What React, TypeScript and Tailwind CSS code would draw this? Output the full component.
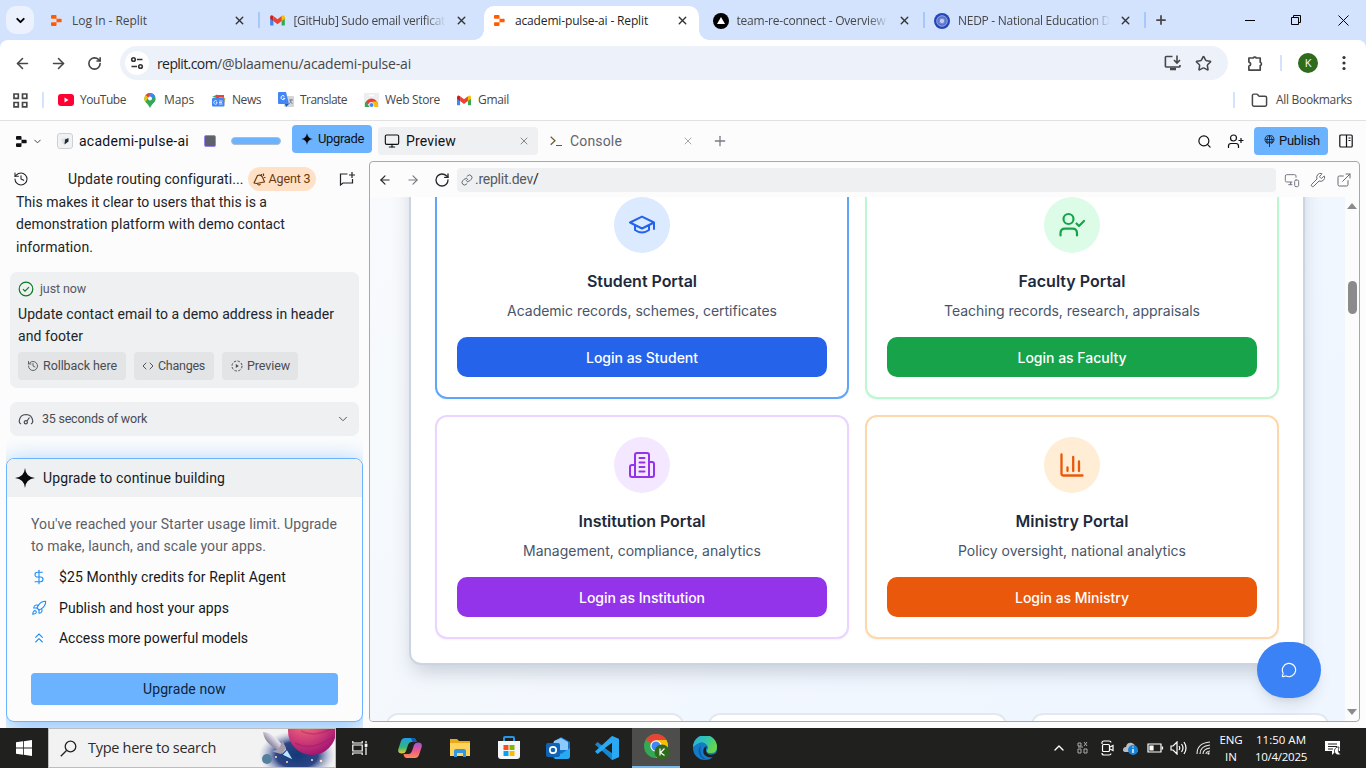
import React, { useLayoutEffect, useRef, useState } from 'react';
import {
  ArrowLeft, ArrowRight, RotateCw, Star, ChevronDown, ChevronUp, X, Plus, Search, Monitor,
  MessageCircle, History, Code, Rocket, ChevronsUp, DollarSign, Wrench, ExternalLink,
  Link, Folder, MonitorSmartphone,
} from 'lucide-react';

/** Single-line text whose tracking is adjusted so it fills the given width. */
function Fit({ w, children, className = '' }: { w: number; children: string; className?: string }) {
  const ref = useRef<HTMLSpanElement>(null);
  const [ls, setLs] = useState(0);
  useLayoutEffect(() => {
    if (!ref.current) return;
    const natural = ref.current.getBoundingClientRect().width - ls * children.length;
    setLs((w - natural) / children.length);
  }, [w, children]);
  return (
    <span ref={ref} className={'inline-block shrink-0 whitespace-pre ' + className} style={{ letterSpacing: ls }}>
      {children}
    </span>
  );
}

const ui = "font-['Open_Sans',sans-serif]";
const plex = "font-['Roboto',sans-serif]";

function ReplitLogo({ className }: { className: string }) {
  return (
    <svg viewBox="0 0 12 14" className={className} fill="currentColor">
      <path d="M1 1h4a1 1 0 0 1 1 1v3H1a1 1 0 0 1-1-1V2a1 1 0 0 1 1-1zM6 5h4.600a1 1 0 0 1 1 1v2a1 1 0 0 1-1 1H6zM1 9h5v3a1 1 0 0 1-1 1H1a1 1 0 0 1-1-1v-2a1 1 0 0 1 1-1z" />
    </svg>
  );
}

function Gmail({ className }: { className: string }) {
  return (
    <svg viewBox="0 0 16 12" className={className}>
      <path d="M0 2.500V10.500Q0 11.500 1 11.500H3.500V4.500z" fill="#4285f4" />
      <path d="M16 2.500V10.500Q16 11.500 15 11.500H12.500V4.500z" fill="#34a853" />
      <path d="M12.500 1.200 14.200.3Q16 .2 16 2.200V4L12.500 6.500z" fill="#fbbc04" />
      <path d="M3.500 1.200 1.800.3Q0 .2 0 2.200V4L3.500 6.500z" fill="#c5221f" />
      <path d="M3.500 1.200 8 4.700l4.500-3.500V6.500L8 10 3.500 6.500z" fill="#ea4335" />
    </svg>
  );
}

function Tab({ icon, title, w, active, sep }: { icon: React.ReactNode; title: string; w: number; active?: boolean; sep?: boolean }) {
  return (
    <div className="flex h-[34px] w-[221.500px] shrink-0 items-start">
      <div className={'relative ml-px flex h-[34px] w-[215px] items-center rounded-t-[10px] pl-[7px] pb-[5px] ' + (active ? 'bg-white' : '')}>
        {active && (
          <>
            <span className="absolute -left-[10px] bottom-0 size-[10px] bg-[radial-gradient(circle_at_0_0,transparent_9.500px,white_10px)]" />
            <span className="absolute -right-[10px] bottom-0 size-[10px] bg-[radial-gradient(circle_at_100%_0,transparent_9.500px,white_10px)]" />
          </>
        )}
        <span className="flex size-4 shrink-0 items-center justify-center">{icon}</span>
        <div className={'ml-2 mr-[9px] w-[152px] overflow-hidden text-[12px] leading-[18px] ' + (active ? 'text-[#1f1f1f]' : 'text-[#474747] ') + (w > 148 ? ' [mask-image:linear-gradient(90deg,black_86%,transparent)]' : '')}>
          <Fit w={w}>{title}</Fit>
        </div>
        <X className="size-[13px] shrink-0 text-[#333]" strokeWidth={2.600} />
      </div>
      {sep && <span className="ml-[2px] mt-[6px] h-4 w-[2px] bg-[#a8c7fa]" />}
    </div>
  );
}

function Bookmark({ icon, label, w, className }: { icon: React.ReactNode; label: string; w: number; className: string }) {
  return (
    <div className={'flex shrink-0 items-center gap-[6px] text-[12px] text-[#474747] ' + className}>
      <span className="flex size-4 items-center justify-center">{icon}</span>
      <Fit w={w}>{label}</Fit>
    </div>
  );
}

function BrowserChrome() {
  return (
    <div className={'shrink-0 bg-[#d3e3fd] ' + ui}>
      <div className="flex h-10 items-start pt-[6px]">
        <div className="ml-[6px] mr-[6px] flex size-7 shrink-0 items-center justify-center rounded-[10px] bg-[#ebf2fe]">
          <ChevronDown className="size-[13px]" strokeWidth={3.500} />
        </div>
        <Tab icon={<ReplitLogo className="h-[13px] w-[11px] text-[#ff5c00]" />} title="Log In - Replit" w={75} sep />
        <Tab icon={<Gmail className="h-[11px] w-[15px]" />} title="[GitHub] Sudo email verificat" w={151.500} />
        <Tab icon={<ReplitLogo className="h-[13px] w-[11px] text-[#ff5c00]" />} title="academi-pulse-ai - Replit" w={133} active />
        <Tab
          icon={<svg viewBox="0 0 16 16" className="size-4"><circle cx="8" cy="8" r="8" /><path d="M8 4 12 11H4z" fill="white" /></svg>}
          title="team-re-connect - Overview" w={149} sep
        />
        <Tab
          icon={<svg viewBox="0 0 16 16" className="size-4"><circle cx="8" cy="8" r="8" fill="#2546b8" /><circle cx="8" cy="8" r="5.300" fill="#5b74cb" stroke="#a9b8ea" strokeWidth=".8" /><circle cx="8" cy="8" r="2.700" fill="#c2ccf1" stroke="#7188d4" /></svg>}
          title="NEDP - National Education D" w={152} sep
        />
        <Plus className="ml-[6px] mt-[7px] size-[14px] shrink-0 text-[#474747]" strokeWidth={3} />
        <div className="ml-auto flex h-7 items-center pr-[17px]">
          <svg className="h-px w-[10px]"><rect width="10" height="1" /></svg>
          <svg viewBox="0 0 10 10" className="ml-9 size-[10px]" fill="none" stroke="black"><path d="M.5 2.500h7v7h-7zM2.500 2.500v-2h7v7h-2" /></svg>
          <svg viewBox="0 0 11 11" className="ml-[37px] size-[11px]" fill="none" stroke="black"><path d="m.5.5 10 10m0-10-10 10" /></svg>
        </div>
      </div>

      <div className="rounded-t-[8px] bg-white">
        <div className="flex h-[46px] items-center pl-1 text-[#474747]">
          <span className="flex w-9 shrink-0 justify-center"><ArrowLeft className="size-[17px]" strokeWidth={2.300} /></span>
          <span className="flex w-9 shrink-0 justify-center"><ArrowRight className="size-[17px]" strokeWidth={2.300} /></span>
          <span className="flex w-9 shrink-0 justify-center"><RotateCw className="size-[15px]" strokeWidth={2.600} /></span>
          <div className="ml-2 flex h-[34px] w-[1108px] shrink-0 items-center rounded-full bg-[#edf1fa] pl-[5px]">
            <span className="flex size-6 items-center justify-center rounded-full bg-white">
              <svg viewBox="0 0 14 14" className="size-[14px]" fill="none" stroke="#333" strokeWidth="1.600">
                <circle cx="3.500" cy="3.500" r="1.800" /><path d="M7 3.500h5.500M1.500 10.500H7" /><circle cx="10.500" cy="10.500" r="1.800" />
              </svg>
            </span>
            <span className="ml-2 flex text-[14px]">
              <Fit w={60} className="text-[#1f1f1f]">replit.com</Fit>
              <Fit w={194}>/@blaamenu/academi-pulse-ai</Fit>
            </span>
            <svg viewBox="0 0 18 16" className="ml-auto mr-[13px] h-4 w-[18px]" fill="none" stroke="currentColor" strokeWidth="1.600">
              <path d="M8.500 1.500H2.200a.8.8 0 0 0-.8.8v8.900a.8.8 0 0 0 .8.8h13a.8.800 0 0 0 .8-.8V10" /><path d="M13 .5V8M10 5l3 3 3-3" /><path d="M6 14h6" strokeWidth="2.500" />
            </svg>
            <Star className="mr-[16px] size-[17px]" strokeWidth={2.200} />
          </div>
          <span className="ml-[9px] flex w-9 shrink-0 justify-center">
            <svg viewBox="0 0 18 18" className="size-[17px]" fill="none" stroke="currentColor" strokeWidth="1.800" strokeLinejoin="round">
              <path d="M2 3.200h4.500a1.900 1.900 0 0 1 3.400 0H14v4.500a1.900 1.900 0 0 1 0 3.600V16H2v-4.300c2.500-.3 2.500-3.800 0-4.200z" />
            </svg>
          </span>
          <span className="ml-[7px] h-4 w-[2px] bg-[#d3e3fd]" />
          <span className="ml-4 flex size-5 shrink-0 items-center justify-center rounded-full bg-[#2f6b1c] text-[11px] text-white">K</span>
          <svg viewBox="0 0 4 16" className="ml-6 h-4 w-1" fill="#333"><circle cx="2" cy="2.500" r="1.600" /><circle cx="2" cy="8" r="1.600" /><circle cx="2" cy="13.500" r="1.600" /></svg>
        </div>

        <div className="flex h-[35px] items-center border-b border-[#e1e1e3] pb-[6px]">
          <svg viewBox="0 0 15 15" className="ml-[13px] size-[15px] shrink-0" fill="none" stroke="#474747" strokeWidth="1.700"><path d="M1 1h4.300v4.300H1zM9.500 1h4.300v4.300H9.500zM1 9.500h4.300v4.300H1zM9.500 9.500h4.300v4.300H9.500z" /></svg>
          <span className="ml-[14px] mr-[14px] h-4 w-[2px] shrink-0 bg-[#d3e3fd]" />
          <Bookmark className="w-[84px]" w={46} label="YouTube" icon={<svg viewBox="0 0 16 12" className="h-3 w-4"><rect width="16" height="12" rx="3" fill="#ff0033" /><path d="M6.500 3.500v5l4-2.500z" fill="white" /></svg>} />
          <Bookmark className="w-[68px]" w={30} label="Maps" icon={
            <svg viewBox="0 0 12 16" className="h-[15px] w-3"><path d="M6 0a6 6 0 0 0-6 6c0 4 4 5 6 10 2-5 6-6 6-10a6 6 0 0 0-6-6" fill="#34a853" /><path d="M0 6a6 6 0 0 1 1.500-4L4.500 4.500 1 9.500A6 6 0 0 1 0 6" fill="#fbbc04" /><path d="M1.500 2A6 6 0 0 1 6 0L4.500 5z" fill="#ea4335" /><path d="M5 0q5-.5 6.500 3.500L6 8z" fill="#4285f4" /><circle cx="6" cy="5.800" r="2.100" fill="white" /></svg>} />
          <Bookmark className="w-[68px]" w={29} label="News" icon={
            <svg viewBox="0 0 15 13" className="h-[13px] w-[15px]"><path d="m1 3 5-2.500 2 4z" fill="#34a853" /><path d="m5 1 8 0v4H5z" fill="#ea4335" /><path d="m8 3 6.500 1-1 5z" fill="#fbbc04" /><rect x="1" y="4" width="12.500" height="8.500" rx="1" fill="#4285f4" /><path d="M6 7.300a1.800 1.800 0 1 0 0 2.200V8.400H4.800M8 7h3.500M8 8.500h3M8 10h3.500" stroke="white" fill="none" strokeWidth=".8" /></svg>} />
          <Bookmark className="w-[85px]" w={47} label="Translate" icon={
            <svg viewBox="0 0 16 16" className="size-4"><rect x="6" y="4" width="10" height="11" rx="1" fill="#d2d5da" /><path d="M1 0h7l3 12H1a1 1 0 0 1-1-1V1a1 1 0 0 1 1-1" fill="#4285f4" /><path d="m7 12 4 0-3 3z" fill="#1a56c4" /><path d="M6.500 4.300a2 2 0 1 0 .4 2H5" stroke="white" fill="none" /><path d="M11 8h4M13 7v1c0 2-1 3-2 4m1-3 2.500 3" stroke="#6b7785" strokeWidth=".8" fill="none" /></svg>} />
          <Bookmark className="w-[93px]" w={55} label="Web Store" icon={
            <svg viewBox="0 0 15 14" className="h-[14px] w-[15px]"><path d="M0 0h15v14H0z" fill="#eceef0" /><path d="M5 2.500h5" stroke="white" strokeWidth="1.500" /><path d="M1 12a6.500 6.500 0 0 1 13 0l-3.500-1a3.200 3.200 0 0 0-6 0z" fill="#ea4335" /><path d="M1 14a6.500 6.500 0 0 1 1-5.500L5.500 14z" fill="#34a853" /><path d="M14 14a6.500 6.500 0 0 0-1-5.500H8.500L10.500 14z" fill="#fbbc04" /><circle cx="7.500" cy="12" r="2.300" fill="#4285f4" stroke="white" strokeWidth=".6" /></svg>} />
          <Bookmark className="" w={31} label="Gmail" icon={<Gmail className="h-[11px] w-[14px]" />} />
          <span className="ml-auto mr-4 h-4 w-[2px] bg-[#d3e3fd]" />
          <Folder className="mr-2 size-[17px] text-[#474747]" strokeWidth={2.100} />
          <span className="mr-[14px] text-[12px] text-[#474747]"><Fit w={76}>All Bookmarks</Fit></span>
        </div>
      </div>
    </div>
  );
}

function Sparkle({ className }: { className: string }) {
  return <svg viewBox="0 0 20 20" className={className} fill="#080a0d"><path d="M10 0Q10.800 9.200 20 10 10.800 10.800 10 20 9.200 10.800 0 10 9.200 9.200 10 0" /><path d="M10 4 12 8l4 2-4 2-2 4-2-4-4-2 4-2z" /></svg>;
}

function WorkspaceHeader() {
  return (
    <div className="flex h-10 shrink-0 items-center text-[14px] text-[#0f1115]">
      <ReplitLogo className="ml-4 h-[13px] w-[11px] shrink-0" />
      <ChevronDown className="ml-[5px] size-[11px] shrink-0 text-[#333]" />
      <span className="ml-[14px] flex size-4 shrink-0 items-center justify-center rounded-[3px] border border-[#cdd1d6] bg-[#f1f2f4]">
        <svg viewBox="0 0 8 8" className="size-2"><path d="M0 2 5 .5v5L2 7.500z" fill="#dde1e6" /><path d="M4 2.500 7.500 1v3.500L3.500 7.500z" fill="#1d2b33" /></svg>
      </span>
      <Fit w={110} className="ml-[6px]">academi-pulse-ai</Fit>
      <span className="ml-[15px] size-3 shrink-0 rounded-[2px] border border-[#9b84f0] bg-[#5f616c]" />
      <span className="ml-[15px] h-2 w-[50px] shrink-0 rounded-full border border-[#a9bdd4] bg-[#6bb3ff]" />
      <div className="ml-[11px] mb-1 flex h-7 w-20 shrink-0 items-center rounded bg-[#6bb3ff] pl-[9px] text-[13px]">
        <Sparkle className="mr-[5px] size-[12px]" /><Fit w={46}>Upgrade</Fit>
      </div>
      <div className="ml-[6px] flex h-7 w-[160px] shrink-0 items-center rounded bg-[#eff0f2] pl-[6px]">
        <Monitor className="size-4" strokeWidth={1.700} /><Fit w={50} className="ml-[6px]">Preview</Fit>
        <X className="ml-auto mr-2 size-3 text-[#777b82]" strokeWidth={1.800} />
      </div>
      <svg viewBox="0 0 12 12" className="ml-3 size-3 shrink-0" fill="none" stroke="#695d2e" strokeWidth="1.200"><path d="m.7 1.700 4.300 4L.7 9.800M6 10.500h6" /></svg>
      <Fit w={52} className="ml-2 text-[#62666d]">Console</Fit>
      <X className="ml-[60px] size-3 shrink-0 text-[#9b9ea4]" strokeWidth={1.800} />
      <Plus className="ml-[18px] size-4 shrink-0 text-[#777b82]" strokeWidth={1.900} />
      <Search className="ml-auto mr-[15px] size-[15px] shrink-0" strokeWidth={1.900} />
      <svg viewBox="0 0 17 15" className="mr-[10px] h-[15px] w-[17px] shrink-0" fill="none" stroke="currentColor" strokeWidth="1.200"><circle cx="6.500" cy="4" r="3" /><path d="M1.500 14v-2q0-2.500 2.500-2.500h5q2.500 0 2.500 2.500v2M14 4v5M11.500 6.500h5" /></svg>
      <div className="mr-[11px] flex h-7 w-[74px] shrink-0 items-center rounded bg-[#6bb3ff] pl-[10px] text-[13px]">
        <svg viewBox="0 0 11 12" className="mr-[4px] h-3 w-[11px]" fill="none" stroke="#16212f" strokeWidth=".9"><path d="M3.500 8.500a4.500 4.500 0 1 1 4 0M1.300 4.500h8.400M5.500 0v12M3.500 8.500c-1.500-3 0-7 2-8.300 2 1.300 3.500 5.300 2 8.300M2 7h7M4 8.500 5.500 7 7 8.500" /></svg>
        <Fit w={41}>Publish</Fit>
      </div>
      <svg viewBox="0 0 14 14" className="mr-[13px] size-[14px] shrink-0" fill="none" stroke="currentColor" strokeWidth="1.200"><rect x=".8" y="1" width="12.400" height="12" rx="1" /><path d="M7.500 1v12M9.500 4h2M9.500 6.500h2" /></svg>
    </div>
  );
}

function Chip({ icon, label, w, className }: { icon: React.ReactNode; label: string; w: number; className: string }) {
  return <span className={'flex h-7 items-center gap-1 rounded bg-[#e3e4e6] pl-[9px] text-[12.500px] text-[#494c52] ' + className}>{icon}<Fit w={w}>{label}</Fit></span>;
}

function AgentPanel() {
  return (
    <div className="flex w-[369px] shrink-0 flex-col text-[14px] text-[#20242a]">
      <div className="flex h-[30px] shrink-0 items-center pt-[6px]">
        <History className="ml-[13px] size-4" strokeWidth={1.600} />
        <Fit w={175} className="ml-[39px]">Update routing configurati...</Fit>
        <div className="ml-1 flex h-6 w-[68px] shrink-0 items-center rounded-full bg-[#ffe1c7] pl-[5px] text-[12.500px] text-[#6e3a08]">
          <svg viewBox="0 0 13 13" className="mr-[3px] size-[13px]" fill="none" stroke="currentColor" strokeWidth="1.200" strokeLinejoin="round"><path d="m1 10 3.500-7.500Q9 1 10.500 6.500L11.500 9l-8 1.500zM4.500 11q1.500 2 3 0M8 1.200l1 1M10.500.5V3M11 4.500h1.500" /></svg>
          <Fit w={42}>Agent 3</Fit>
        </div>
        <svg viewBox="0 0 16 15" className="ml-[23px] h-[15px] w-4" fill="none" stroke="currentColor" strokeWidth="1.200"><path d="M8.500 2H1.500v11L4 11h9.500V7M13 0v6M10 3h6" /></svg>
      </div>
      <div className="pl-4 text-[14px] leading-[22.400px]">
        <div className="h-[22.400px]"><Fit w={251}>This makes it clear to users that this is a</Fit></div>
        <div className="h-[22.400px]"><Fit w={269}>demonstration platform with demo contact</Fit></div>
        <div className="h-[22.400px]"><Fit w={77}>information.</Fit></div>
      </div>
      <div className="ml-[10px] mt-[14px] h-[116px] w-[349px] shrink-0 rounded-[7px] bg-[#eff0f2] pl-2 pt-[9px]">
        <div className="flex h-4 items-center text-[12.500px] text-[#555960]">
          <svg viewBox="0 0 16 16" className="mr-[6px] size-4" fill="none" stroke="#087a20" strokeWidth="1.200"><circle cx="8" cy="8" r="6.800" /><path d="m5 8.200 2 2 4-4" /></svg>
          <Fit w={46}>just now</Fit>
        </div>
        <div className="mt-[6px] h-[22px] leading-[22px]"><Fit w={316}>Update contact email to a demo address in header</Fit></div>
        <div className="h-[22px] leading-[22px]"><Fit w={65}>and footer</Fit></div>
        <div className="mt-[5px] flex gap-2">
          <Chip className="w-[108px]" label="Rollback here" w={74} icon={<History className="size-3" strokeWidth={1.700} />} />
          <Chip className="w-[80px]" label="Changes" w={47} icon={<Code className="-ml-px size-3" strokeWidth={1.900} />} />
          <Chip className="w-[76px]" label="Preview" w={43} icon={<svg viewBox="0 0 12 12" className="size-3"><circle cx="6" cy="6" r="5" fill="none" stroke="currentColor" strokeDasharray="2.400 1.520" /><path d="M4.800 4v4l3-2z" fill="currentColor" /></svg>} />
        </div>
      </div>
      <div className="ml-[10px] mt-[14px] flex h-[34px] w-[349px] shrink-0 items-center rounded-[7px] bg-[#eff0f2] pl-2 text-[12.500px] text-[#494c52]">
        <svg viewBox="0 0 16 14" className="mr-2 h-[14px] w-4" fill="none" stroke="currentColor" strokeWidth="1.200"><path d="M3 12Q1 11 1.200 9 2 2.700 8 2.500q6 .2 6.800 6.500.2 2-1.800 3M9 9l2.500-3.500" /><circle cx="7.800" cy="10.200" r="1.600" /></svg>
        <Fit w={105}>35 seconds of work</Fit>
        <ChevronDown className="ml-auto mr-[9px] size-[14px]" strokeWidth={1.600} />
      </div>
      <div className="ml-[6px] h-[292px] w-[357px] shrink-0 overflow-hidden pt-[22px]">
        <div className="h-[264px] rounded-[8px] border border-[#6bb3ff] bg-[#fcfcfc] shadow-[0_7px_26px_2px_#6bb3ffc0]">
          <div className="flex h-[38px] items-center rounded-t-[7px] bg-[#eff0f2] pl-2 text-[#171a1f]">
            <Sparkle className="mr-2 size-5" /><Fit w={182}>Upgrade to continue building</Fit>
          </div>
          <div className="px-6 pt-[16px] leading-[22px] text-[#5c6068]">
            <div className="h-[22px]"><Fit w={306}>You've reached your Starter usage limit. Upgrade</Fit></div>
            <div className="h-[22px]"><Fit w={235}>to make, launch, and scale your apps.</Fit></div>
            <div className="mt-[5px] flex h-[30.500px] items-center text-[#14171b]"><DollarSign className="mr-[12px] size-4 text-[#1b8df5]" strokeWidth={1.600} /><Fit w={227}>$25 Monthly credits for Replit Agent</Fit></div>
            <div className="flex h-[30.500px] items-center text-[#14171b]"><Rocket className="mr-[12px] size-4 text-[#1b8df5]" strokeWidth={1.600} /><Fit w={170}>Publish and host your apps</Fit></div>
            <div className="flex h-[30.500px] items-center text-[#14171b]"><ChevronsUp className="mr-[12px] size-4 text-[#1b8df5]" strokeWidth={1.600} /><Fit w={189}>Access more powerful models</Fit></div>
            <div className="mt-[19px] flex h-8 w-[307px] items-center justify-center rounded bg-[#6bb3ff] text-[#10233a]"><Fit w={83}>Upgrade now</Fit></div>
          </div>
        </div>
      </div>
    </div>
  );
}

function PortalCard({ title, tw, desc, dw, action, aw, border, circle, button, icon }: {
  title: string; tw: number; desc: string; dw: number; action: string; aw: number; border: string; circle: string; button: string; icon: React.ReactNode;
}) {
  return (
    <div className={'flex h-[224px] flex-col items-center rounded-[12px] border-2 bg-white p-5 shadow-[0_1px_2px_rgba(0,0,0,.05)] ' + border}>
      <div className={'flex size-14 shrink-0 items-center justify-center rounded-full ' + circle}>{icon}</div>
      <h3 className="mt-4 text-[16px] font-semibold leading-6 text-[#1e293b]"><Fit w={tw}>{title}</Fit></h3>
      <p className="mt-2 text-[14px] leading-5 text-[#475569]"><Fit w={dw}>{desc}</Fit></p>
      <div className={'mt-4 flex h-10 w-full shrink-0 items-center justify-center rounded-[10px] text-[14px] font-medium text-white ' + button}><Fit w={aw}>{action}</Fit></div>
    </div>
  );
}

const stroke = { fill: 'none', stroke: 'currentColor', strokeWidth: 2, strokeLinecap: 'round' as const, strokeLinejoin: 'round' as const };

function PreviewPane() {
  return (
    <div className="flex h-[561px] w-[991px] shrink-0 flex-col overflow-hidden rounded-[4px] border border-[#a6a8ab] bg-[#fcfcfc]">
      <div className="flex h-[35px] shrink-0 items-center text-[14px] text-[#25282d]">
        <ArrowLeft className="ml-2 size-[14px]" strokeWidth={2.100} />
        <ArrowRight className="ml-[14px] size-[14px] text-[#777b82]" strokeWidth={2} />
        <RotateCw className="ml-[14px] size-4" strokeWidth={2} />
        <div className="ml-[7px] flex h-6 w-[819px] shrink-0 items-center rounded bg-[#eff0f2] pl-1 text-[#565a61]">
          <Link className="mr-[2px] size-3" strokeWidth={1.800} /><Fit w={58}>.replit.dev</Fit><span className="text-[#111]">/</span>
        </div>
        <MonitorSmartphone className="ml-2 size-4 text-[#777b82]" strokeWidth={1.500} />
        <Wrench className="ml-[10px] size-4 text-[#666a71]" strokeWidth={1.500} />
        <ExternalLink className="ml-[10px] size-4 text-[#666a71]" strokeWidth={1.500} />
      </div>
      <div className="flex min-h-0 flex-1">
        <div className="relative w-[975px] shrink-0 overflow-hidden bg-[linear-gradient(135deg,#f8fafc,#eff6ff_80%)] font-['Inter',sans-serif]">
          <div className="-mt-[60px] ml-[39px] w-[896px] rounded-[12px] border-2 border-[#cbd5e1] bg-white p-6 pt-9 shadow-[0_10px_20px_-4px_rgba(71,85,105,.28)]">
            <div className="grid grid-cols-2 gap-4">
              <PortalCard title="Student Portal" tw={110} desc="Academic records, schemes, certificates" dw={270} action="Login as Student" aw={112}
                border="border-[#60a5fa]" circle="bg-[#dbeafe] text-[#2563eb]" button="bg-[#2563eb]" icon={<svg viewBox="0 0 28 28" className="size-7" {...stroke}><path d="m2 11.500 12-5.800 12 5.800-12 6zM26 11.500V18M7 14.500V19q7 5 14 0v-4.500" /></svg>} />
              <PortalCard title="Faculty Portal" tw={107} desc="Teaching records, research, appraisals" dw={256} action="Login as Faculty" aw={109}
                border="border-[#bbf7d0]" circle="bg-[#dcfce7] text-[#16a34a]" button="bg-[#16a34a]" icon={<svg viewBox="0 0 28 28" className="size-7" {...stroke} strokeWidth={2.200}><circle cx="10.500" cy="8" r="5" /><path d="M2.500 24.500v-2.300q0-4.500 4.500-4.500h7.500q4.500 0 4.500 4.500v2.300M18.500 12.500l2.500 2.500 5-5" /></svg>} />
              <PortalCard title="Institution Portal" tw={127} desc="Management, compliance, analytics" dw={238} action="Login as Institution" aw={126}
                border="border-[#e9d5ff]" circle="bg-[#f3e8ff] text-[#9333ea]" button="bg-[#9333ea]" icon={<svg viewBox="0 0 28 28" className="size-7" {...stroke}><path d="M7 26V4q0-2 2-2h10q2 0 2 2v22zM7 14H4q-2 0-2 2v8q0 2 2 2h20q2 0 2-2V13q0-2-2-2h-3M11.500 7h5M11.500 11.500h5M11.500 16h5M11.500 20.500h5" /></svg>} />
              <PortalCard title="Ministry Portal" tw={113} desc="Policy oversight, national analytics" dw={228} action="Login as Ministry" aw={114}
                border="border-[#fed7aa]" circle="bg-[#ffedd5] text-[#ea580c]" button="bg-[#ea580c]" icon={<svg viewBox="0 0 28 28" className="size-7" {...stroke} strokeWidth={2.300}><path d="M3.500 3.500v19q0 2 2 2h19M9.500 20v-3.500M15.200 20V6M21 20v-9.500" /></svg>} />
            </div>
          </div>
          <div className="mt-12 grid grid-cols-3 gap-6 pl-[15.500px] pr-4">
            <div className="h-20 rounded-[12px] border-2 border-[#e2e8f0] bg-white" />
            <div className="h-20 rounded-[12px] border-2 border-[#e2e8f0] bg-white" />
            <div className="h-20 rounded-[12px] border-2 border-[#e2e8f0] bg-white" />
          </div>
          <div className="absolute bottom-[23px] right-6 flex h-14 w-16 items-center justify-center rounded-full bg-[#3b82f6] text-white shadow-lg">
            <MessageCircle className="size-4" strokeWidth={1.700} />
          </div>
        </div>
        <div className="flex w-[14px] flex-col items-center py-[6px]">
          <svg viewBox="0 0 10 6" className="h-[6px] w-[10px]"><path d="M0 6 5 0l5 6z" fill="#8b8b8b" /></svg>
          <div className="mt-[72px] h-[33px] w-[9px] rounded-full bg-[#8b8b8b]" />
          <svg viewBox="0 0 10 6" className="mt-auto h-[6px] w-[10px]"><path d="M0 0h10L5 6z" fill="#8b8b8b" /></svg>
        </div>
      </div>
    </div>
  );
}

function SearchArt() {
  return (
    <svg viewBox="0 0 76 38" className="ml-auto h-[38px] w-[76px]">
      <defs>
        <radialGradient id="neb"><stop offset="0" stopColor="#123a78" /><stop offset=".55" stopColor="#2e4585" /><stop offset="1" stopColor="#9fa8d0" stopOpacity="0" /></radialGradient>
        <radialGradient id="pl" cx=".35" cy=".25" r=".8"><stop offset="0" stopColor="#f08a6c" /><stop offset=".45" stopColor="#dc4a78" /><stop offset="1" stopColor="#a01272" /></radialGradient>
        <linearGradient id="rk" x1="0" y1="0" x2="0" y2="1"><stop offset="0" stopColor="#f2eef4" /><stop offset="1" stopColor="#85809a" /></linearGradient>
      </defs>
      <ellipse cx="38" cy="26" rx="38" ry="24" fill="url(#neb)" />
      <circle cx="53" cy="2" r="24" fill="url(#pl)" />
      <path d="M36 14q16 9 38-6M42 2q14 7 32-3" stroke="#8e1463" strokeWidth="1.500" fill="none" opacity=".35" />
      <circle cx="8" cy="30" r="5" fill="#53809c" />
      <g transform="rotate(43 4 3)"><path d="M4 3Q10-2 18-1.500L33 0v6L18 7.500Q10 8 4 3" fill="url(#rk)" /><path d="m24-4 8 3v8l-8 4 3-7z" fill="#a39dac" /><path d="M34 0 44 3 34 6z" fill="#bfe5ff" /></g>
      <g fill="#ffe1b2"><circle cx="17" cy="28" r="1" /><circle cx="28" cy="33" r="1" /><circle cx="53" cy="31" r="1" /><circle cx="62" cy="32" r="1.300" /></g>
    </svg>
  );
}

function Taskbar() {
  const cell = 'flex h-10 w-[49px] shrink-0 items-center justify-center';
  return (
    <div className={'flex h-10 shrink-0 items-center bg-[#20211f] text-white ' + ui}>
      <span className="flex w-12 shrink-0 justify-center"><svg viewBox="0 0 16 16" className="size-4" fill="white"><path d="M0 2.300 7 1.300v6.300H0zM7.800 1.200 16 0v7.600H7.800zM0 8.400h7v6.300l-7-1zM7.800 8.400H16V16l-8.200-1.200z" /></svg></span>
      <div className="flex h-10 w-[288px] shrink-0 items-center overflow-hidden border border-[#bdbdbd] bg-[#f2f2f2] pl-[11px] text-[#2c2c2c]">
        <svg viewBox="0 0 17 17" className="mr-[11px] size-[17px]" fill="none" stroke="#222" strokeWidth="1.300"><circle cx="10.500" cy="6.500" r="5.300" /><path d="M6.500 10.500.8 16.200" /></svg>
        <span className="text-[14.500px]"><Fit w={128}>Type here to search</Fit></span>
        <SearchArt />
      </div>
      <span className="flex w-12 shrink-0 justify-center"><svg viewBox="0 0 16 16" className="size-4" fill="none" stroke="white" strokeWidth="1.200"><path d="M.8 1v2h9.400V1M.8 5h9.400v6H.8zM.8 15v-2h9.400v2M14 1v2M14 7.500V15" /><rect x="13.300" y="4.300" width="1.500" height="2" fill="white" /></svg></span>
      <span className="flex w-[52px] shrink-0 justify-center">
        <svg viewBox="0 0 24 22" className="h-[22px] w-6"><defs>
          <linearGradient id="cpa" x1="0" y1="0" x2="0" y2="1"><stop offset="0" stopColor="#209ee8" /><stop offset=".6" stopColor="#35b678" /><stop offset="1" stopColor="#ecca32" /></linearGradient>
          <linearGradient id="cpb" x1="0" y1="0" x2="0" y2="1"><stop offset="0" stopColor="#9856df" /><stop offset=".5" stopColor="#ec588e" /><stop offset="1" stopColor="#ff8c50" /></linearGradient></defs>
          <path d="M7 1h8q3 0 3.500 4H13q-2 0-3 3l-2 6q-.8 2.500-4 2.500-5 0-3.500-5L3 4q1-3 4-3" fill="url(#cpa)" />
          <path d="M17 21H9q-3 0-3.500-4H11q2 0 3-3l2-6q.8-2.500 4-2.500 5 0 3.500 5L21 18q-1 3-4 3" fill="url(#cpb)" />
          <path d="M13 1h2q3 0 3.500 4h-4z" fill="#1558b5" />
        </svg>
      </span>
      <span className={cell + ' -ml-[1px]'}><svg viewBox="0 0 22 20" className="h-5 w-[22px]"><path d="M1 1h7l2 2h11v6H1z" fill="#e9a91b" /><path d="M1 5h20v13H1z" fill="#ffd45c" /><path d="M5 19v-6q0-2 2-2h8q2 0 2 2v6h-3v-4H8v4z" fill="#3597df" /></svg></span>
      <span className={cell}><svg viewBox="0 0 24 24" className="size-6"><path d="M7 5V2q0-1 1-1h8q1 0 1 1v3" fill="none" stroke="#2796e5" strokeWidth="2" /><path d="M1 5h22v15q0 3-3 3H4q-3 0-3-3z" fill="#f4f6f8" /><path d="M6.500 9h5v5h-5z" fill="#f25022" /><path d="M12.500 9h5v5h-5z" fill="#7fba00" /><path d="M6.500 15h5v5h-5z" fill="#00a4ef" /><path d="M12.500 15h5v5h-5z" fill="#ffb900" /></svg></span>
      <span className={cell}><svg viewBox="0 0 24 22" className="h-[22px] w-6"><path d="m7 5 8-5 9 5v14q0 3-3 3H10q-3 0-3-3z" fill="#1473c9" /><path d="m8 4 7-3 7 4v8H8z" fill="#8ccafa" /><path d="m6 12 9 5 9-6v8q0 3-3 3H9z" fill="#29a9ef" /><rect y="6" width="14" height="14" rx="2" fill="#0f62b5" /><circle cx="7" cy="13" r="3.200" fill="none" stroke="white" strokeWidth="1.700" /></svg></span>
      <span className={cell}><svg viewBox="0 0 24 24" className="size-6"><path d="m17 0 7 3v18l-7 3L0 8.500 2.500 6 17 17z" fill="#1687cf" /><path d="m17 0 7 3v18l-7 3V7L2.500 18 0 15.500z" fill="#2aa8f2" /><path d="m17 7-7 5 7 5z" fill="#20211f" /></svg></span>
      <span className="ml-px flex h-10 w-12 shrink-0 items-center justify-center border-b-2 border-[#76b9ed] bg-[#4d4e4c]">
        <svg viewBox="0 0 26 26" className="ml-[2px] size-[26px]"><circle cx="12" cy="12" r="12" fill="#34a853" /><path d="M12 12 1.600 6A12 12 0 0 1 22.400 6z" fill="#ea4335" /><path d="M12 6h10.400A12 12 0 0 1 12 24l5-9z" fill="#fbbc04" /><circle cx="12" cy="12" r="5.700" fill="white" /><circle cx="12" cy="12" r="4.500" fill="#4285f4" /><circle cx="18" cy="18" r="7.500" fill="#2f6b1c" /><path d="M16 14.500v7M20.500 14.500l-4 4 4 3" fill="none" stroke="white" strokeWidth="1.200" /></svg>
      </span>
      <span className={cell}><svg viewBox="0 0 24 24" className="size-6"><defs><linearGradient id="ed" x1="0" y1="0" x2="1" y2=".5"><stop offset="0" stopColor="#25aee8" /><stop offset=".6" stopColor="#35c6a7" /><stop offset="1" stopColor="#69d643" /></linearGradient></defs><circle cx="12" cy="12" r="12" fill="#147bc9" /><path d="M0 11A12 12 0 0 1 24 11q0 6-6 6-5 0-4-3 2-2 0-5-4-5-10-1-3 2-4 3" fill="url(#ed)" /><path d="M14 10.500q-1.500 1.500-1 4.500 1 3.500 5 3.700 3 0 5.300-1.700.5 2-3 4.500-3-.5-5.500-.5-5-2-4.500-6.500.5-4 3.700-4" fill="#20211f" /><path d="M8 9q-5 6 0 12 3 3 7 2.700Q5 21 8 9" fill="#0e56a8" /></svg></span>

      <div className="ml-auto flex h-10 items-center">
        <ChevronUp className="size-4" strokeWidth={2} />
        <svg viewBox="0 0 12 14" className="ml-[10px] h-[14px] w-3" fill="none" stroke="#aaa" strokeWidth="1"><path d="M1 2h3v3H1zM1 8h3v4H1zM7 1l3 4M10 1 7 5M7 8h3v4H7zM6 6H1" /></svg>
        <svg viewBox="0 0 14 16" className="ml-[11px] h-4 w-[14px]" fill="none" stroke="white" strokeWidth="1.200"><path d="M2 4V2.500Q2 1 4 1h5q2 0 2 1.500M2 13q0 2 2 2h5q2 0 2-1.500" /><rect x="2.500" y="4.500" width="7" height="7" rx="1" /><path d="m10 7 3-1.500v5L10 9" /></svg>
        <svg viewBox="0 0 17 16" className="ml-[8px] h-4 w-[17px]"><path d="M1 10q0-3 3-3 1-5 6-4 3 1 3 4l3 5H4q-3 0-3-2" fill="#b7bdc3" /><circle cx="11" cy="10" r="5" fill="#1683d8" /><path d="M11 9v4M11 6.500v1" stroke="white" strokeWidth="1.400" /></svg>
        <svg viewBox="0 0 17 10" className="ml-2 h-[10px] w-[17px]" fill="none" stroke="white" strokeWidth="1.200"><path d="M1 1h13v8H1zM15.500 3.500v3" /><path d="M3 3h3v4H3z" fill="white" /></svg>
        <svg viewBox="0 0 17 14" className="ml-[6px] h-[14px] w-[17px]" fill="none" stroke="white" strokeWidth="1.200"><path d="M1 5h2l4-4v12L3 9H1zM9 5q1.500 2 0 4M11.500 3q3 4 0 8M14 1q4 6 0 12" /></svg>
        <svg viewBox="0 0 15 14" className="ml-[9px] h-[14px] w-[15px]" fill="none" stroke="#e8e8e8" strokeWidth="1.100"><path d="M1 13Q1 2 14 1M4 13q0-8 10-9M7 13q0-5 7-6M10 13q0-2.500 4-3" /><circle cx="12.500" cy="12.500" r=".6" fill="white" /></svg>
        <div className="ml-2 flex w-6 flex-col items-center text-[11.500px] leading-[17px]"><Fit w={23}>ENG</Fit><Fit w={12}>IN</Fit></div>
        <div className="ml-[11px] flex w-[54px] flex-col items-center text-[11.500px] leading-[17px]"><Fit w={50}>11:50 AM</Fit><Fit w={52}>10/4/2025</Fit></div>
        <svg viewBox="0 0 17 17" className="ml-4 mr-[25px] size-[17px]"><path d="M1 1h15v10h-4l-4 4v-4H1z" fill="white" /><path d="M4 4h9M4 6.500h9M4 9h5" stroke="#20211f" strokeWidth="1.100" /><path d="M15 7a4 4 0 1 0 2 7q-4-1-2-7" fill="white" stroke="#20211f" strokeWidth=".8" /></svg>
      </div>
    </div>
  );
}

export default function App() {
  return (
    <div className="flex h-[768px] w-[1366px] flex-col overflow-hidden bg-[#fcfcfc]">
      <BrowserChrome />
      <div className={'flex h-[607px] shrink-0 flex-col overflow-hidden ' + plex}>
        <WorkspaceHeader />
        <div className="flex h-[567px] shrink-0">
          <AgentPanel />
          <PreviewPane />
        </div>
      </div>
      <Taskbar />
    </div>
  );
}
